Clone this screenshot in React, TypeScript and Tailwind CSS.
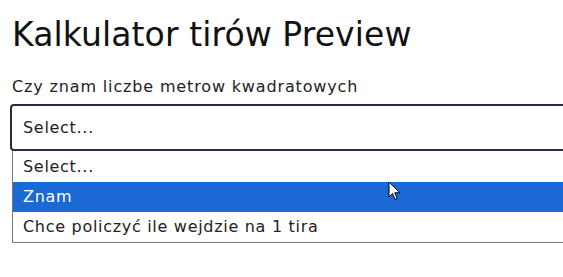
export default function App() {
  const font = { fontFamily: '"DejaVu Sans", "Noto Sans", sans-serif' };
  return (
    <div className="relative w-[563px] h-[277px] bg-white overflow-hidden text-[#111]" style={font}>
      <div className="pl-[12px] pt-[15px]">
        <h1 className="text-[33px] leading-[40px] font-normal text-[#111] tracking-[0.1px]">Kalkulator tirów Preview</h1>
        <div className="mt-[22px] text-[16px] leading-[20px] text-[#222] tracking-[0.85px]">Czy znam liczbe metrow kwadratowych</div>
      </div>
      <div className="ml-[10px] mt-[7px] w-[600px]">
        <div className="h-[47px] border-2 border-[#2b2742] rounded-[4px] flex items-center pl-[11px] text-[16px] tracking-[0.7px] text-[#222]">Select...</div>
        <div className="ml-[2px] border border-[#7a7a7a] border-t-0 text-[16px] tracking-[0.7px]">
          <div className="h-[31px] flex items-center pl-[10px] text-[#222]">Select...</div>
          <div className="h-[30px] flex items-center pl-[10px] bg-[#1a69d4] text-white">Znam</div>
          <div className="h-[30px] flex items-center pl-[10px] text-[#222]">Chce policzyć ile wejdzie na 1 tira</div>
        </div>
      </div>
      <svg className="absolute left-[388px] top-[181px]" width="14" height="20" viewBox="0 0 14 20">
        <path d="M1 1 L1 16 L4.5 12.5 L7 18.5 L9.2 17.6 L6.8 11.8 L11.8 11.8 Z" fill="white" stroke="black" strokeWidth="1" strokeLinejoin="round" />
      </svg>
    </div>
  );
}
